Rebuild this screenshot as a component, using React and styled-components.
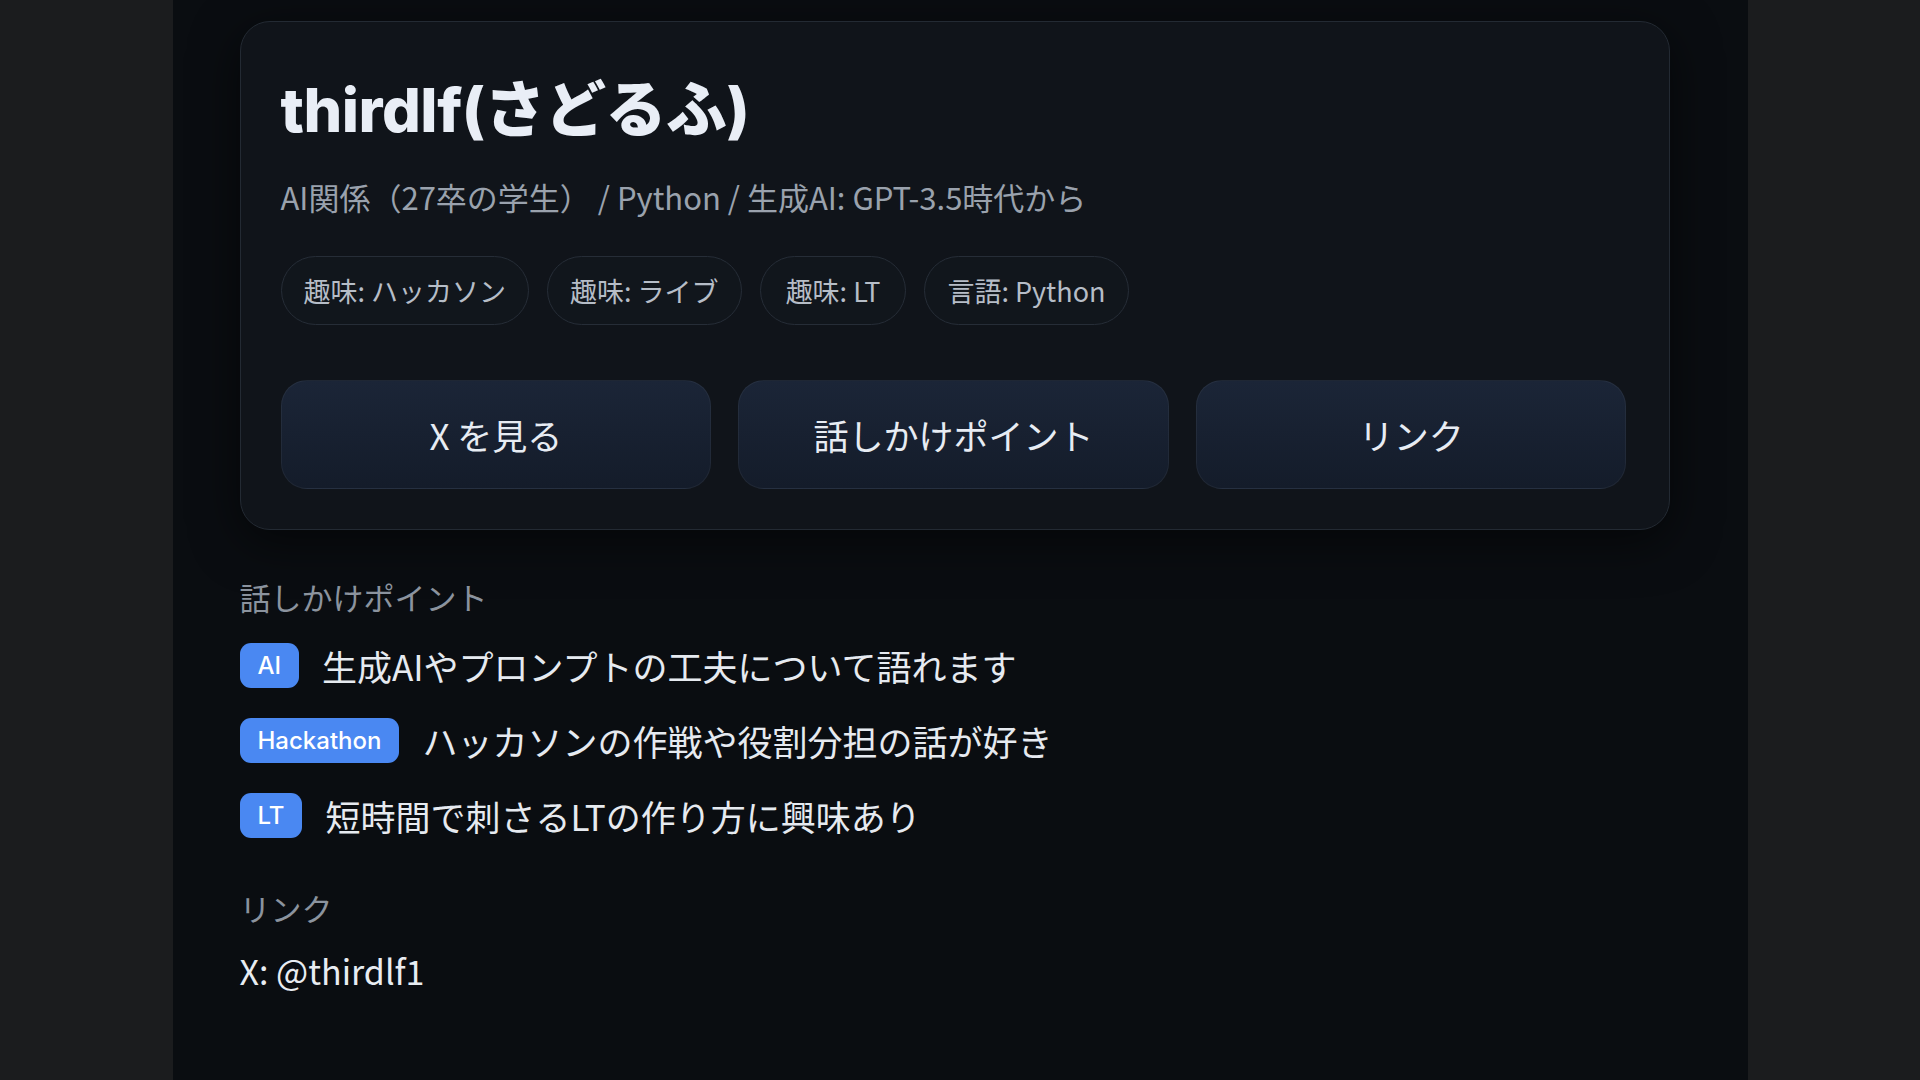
import React from "react";
import styled, { createGlobalStyle } from "styled-components";

const GlobalStyle = createGlobalStyle`
  html, body {
    margin: 0;
    padding: 0;
    background: #1b1c1e;
  }
  * { box-sizing: border-box; }
  body {
    font-family: "Inter", "Noto Sans CJK JP", sans-serif;
    -webkit-font-smoothing: antialiased;
  }
`;

const Page = styled.div`
  min-height: 100vh;
  display: flex;
  justify-content: center;
  background: #1b1c1e;
`;

const Column = styled.main`
  width: 1575px;
  min-height: 1080px;
  background: #0a0d11;
  padding: 21px 78px 0 67px;
`;

const Card = styled.section`
  border: 1px solid #232a33;
  border-radius: 30px;
  background: #10141a;
  padding: 50px 42px 40px 40px;
  box-shadow: 0 12px 48px rgba(0, 0, 0, 0.55);
`;

const Title = styled.h1`
  margin: 0;
  font-family: "Inter", "Noto Sans CJK JP", sans-serif;
  font-size: 61px;
  font-weight: 800;
  line-height: 76px;
  letter-spacing: -0.5px;
  color: #e9eef6;
`;

const Subtitle = styled.p`
  margin: 27px 0 0;
  font-family: "Noto Sans CJK JP", sans-serif;
  font-size: 31px;
  line-height: 44px;
  color: #9aa2ad;
`;

const ChipRow = styled.div`
  display: flex;
  gap: 18px;
  margin-top: 37px;
`;

const Chip = styled.span`
  display: inline-flex;
  align-items: center;
  height: 69px;
  padding: 0 ${(p) => p.$pad}px;
  border: 1px solid #262d37;
  border-radius: 35px;
  background: #11161c;
  font-family: "Noto Sans CJK JP", sans-serif;
  font-size: 27px;
  color: #b6bdc7;
`;

const ButtonRow = styled.div`
  display: grid;
  grid-template-columns: repeat(3, 1fr);
  gap: 27px;
  margin-top: 55px;
`;

const ActionButton = styled.button`
  height: 109px;
  border: 1px solid rgba(255, 255, 255, 0.05);
  border-radius: 26px;
  background: linear-gradient(180deg, #1b2537 0%, #141c2a 100%);
  font-family: "Noto Sans CJK JP", sans-serif;
  font-size: 35px;
  color: #e7ecf3;
  cursor: pointer;
`;

const Section = styled.section`
  margin-top: ${(p) => p.$top}px;
`;

const SectionHeading = styled.h2`
  margin: 0;
  font-family: "Noto Sans CJK JP", sans-serif;
  font-size: 31px;
  font-weight: 400;
  line-height: 42px;
  color: #8b939e;
`;

const PointList = styled.ul`
  list-style: none;
  margin: 25px 0 0;
  padding: 0;
  display: flex;
  flex-direction: column;
  gap: 30px;
`;

const PointItem = styled.li`
  display: flex;
  align-items: center;
  gap: 23px;
  height: 45px;
`;

const Badge = styled.span`
  display: inline-flex;
  align-items: center;
  justify-content: center;
  height: 45px;
  padding: 0 18px;
  border-radius: 11px;
  background: #4a88f2;
  font-family: "Inter", sans-serif;
  font-size: 24px;
  font-weight: 500;
  color: #ffffff;
`;

const PointText = styled.span`
  font-family: "Noto Sans CJK JP", sans-serif;
  font-size: 35px;
  color: #e6eaf0;
`;

const LinkText = styled.p`
  margin: 20px 0 0;
  font-family: "Noto Sans CJK JP", sans-serif;
  font-size: 34px;
  line-height: 44px;
  color: #e8ecf2;
`;

const tags = [
  { label: "趣味: ハッカソン", pad: 22 },
  { label: "趣味: ライブ", pad: 22 },
  { label: "趣味: LT", pad: 25 },
  { label: "言語: Python", pad: 22 },
];
const actions = ["X を見る", "話しかけポイント", "リンク"];
const points = [
  { badge: "AI", text: "生成AIやプロンプトの工夫について語れます" },
  { badge: "Hackathon", text: "ハッカソンの作戦や役割分担の話が好き" },
  { badge: "LT", text: "短時間で刺さるLTの作り方に興味あり" },
];

export default function App() {
  return (
    <>
      <GlobalStyle />
      <Page>
        <Column>
          <Card>
            <Title>thirdlf(さどるふ)</Title>
            <Subtitle>AI関係（27卒の学生） / Python / 生成AI: GPT-3.5時代から</Subtitle>
            <ChipRow>
              {tags.map((t) => (
                <Chip key={t.label} $pad={t.pad}>
                  {t.label}
                </Chip>
              ))}
            </ChipRow>
            <ButtonRow>
              {actions.map((a) => (
                <ActionButton key={a}>{a}</ActionButton>
              ))}
            </ButtonRow>
          </Card>
          <Section $top={46}>
            <SectionHeading>話しかけポイント</SectionHeading>
            <PointList>
              {points.map((p) => (
                <PointItem key={p.badge}>
                  <Badge>{p.badge}</Badge>
                  <PointText>{p.text}</PointText>
                </PointItem>
              ))}
            </PointList>
          </Section>
          <Section $top={49}>
            <SectionHeading>リンク</SectionHeading>
            <LinkText>X: @thirdlf1</LinkText>
          </Section>
        </Column>
      </Page>
    </>
  );
}
